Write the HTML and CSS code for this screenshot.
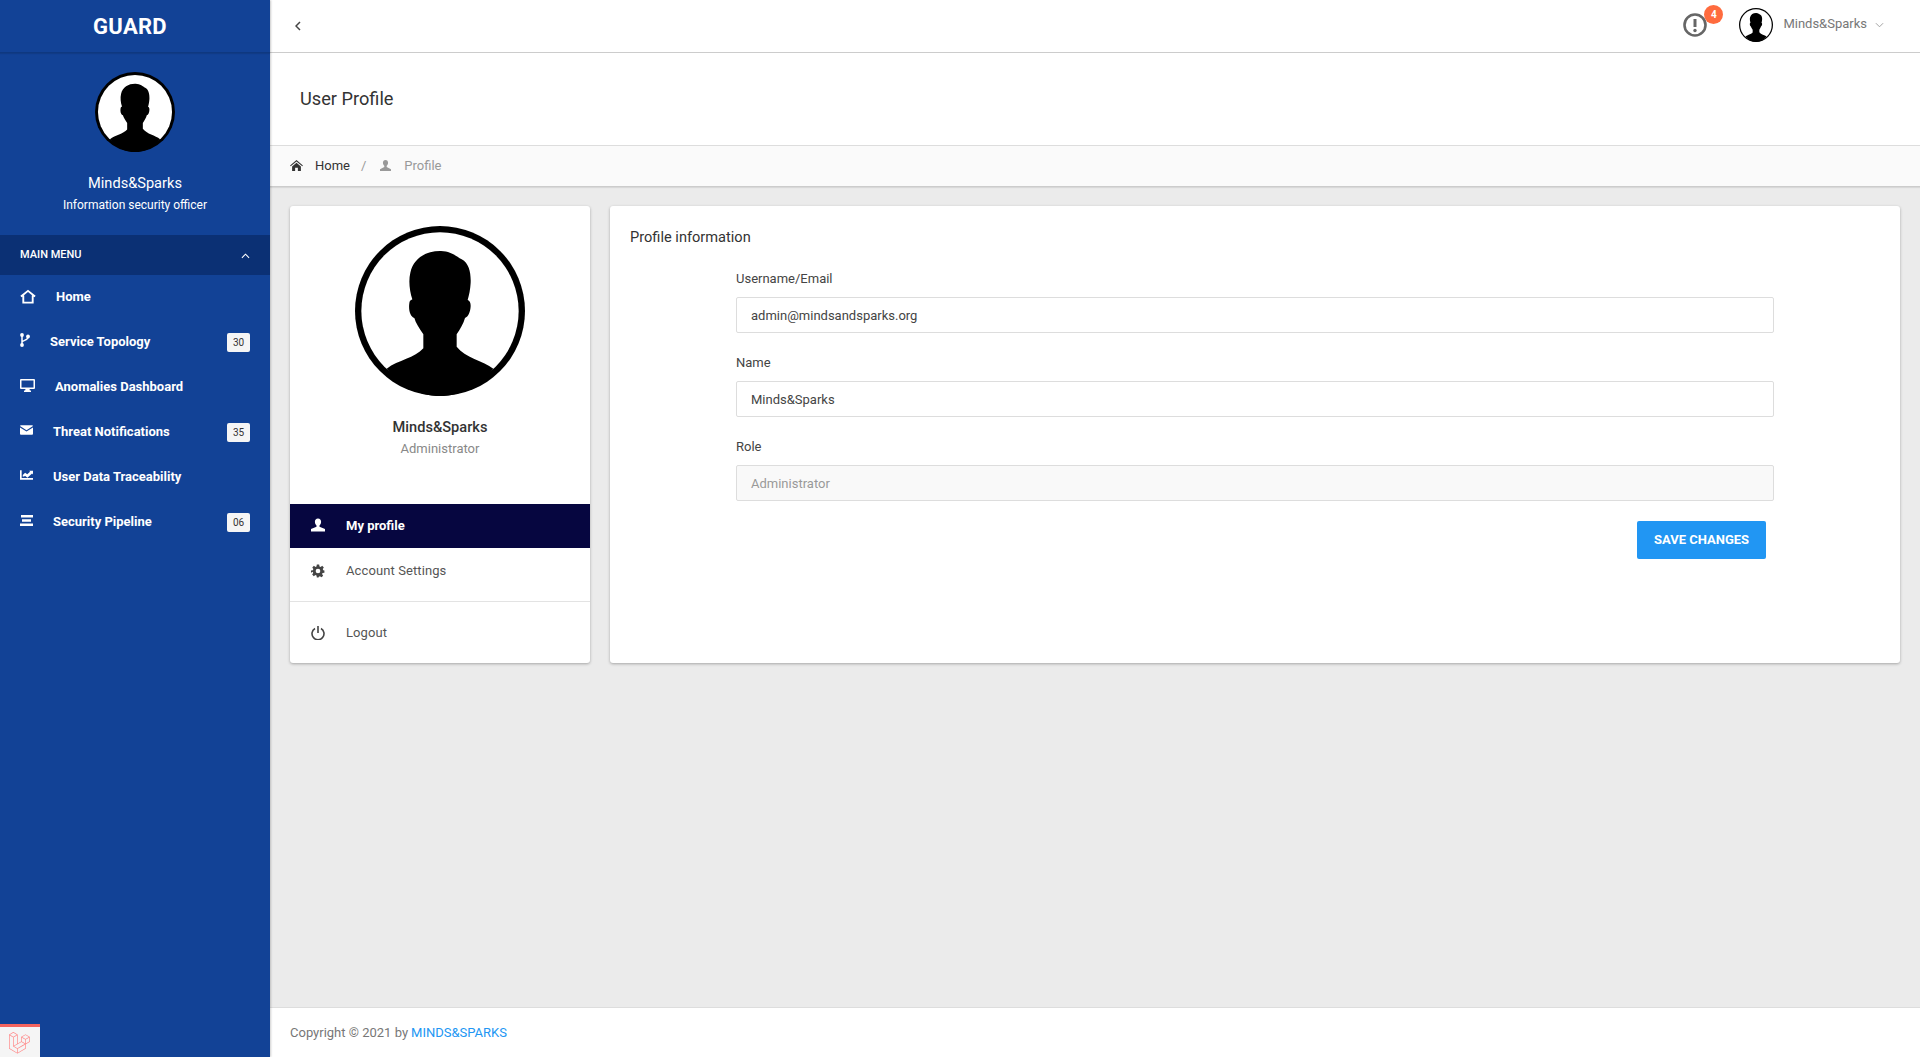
FILE: index.html
```html
<!DOCTYPE html>
<html>
	<head>
		<meta charset="utf-8">
		<title>User Profile</title>
		<link rel="stylesheet" href="styles.css">
	</head>
	<body>
		<svg class="defs" width="0" height="0">
			<symbol id="avatar" viewBox="0 0 510 510">
				<circle cx="255" cy="255" r="255" fill="#000"/>
				<circle cx="255" cy="255" r="236" fill="#fff"/>
				<path fill="#000" d="M95 428C130 402 180 396 205 367L205 325C192 306 182 290 178 276C166 272 160 252 163 232C164 222 170 222 172 220C164 196 160 165 166 140C176 95 215 74 258 75C290 76 305 92 320 100C342 112 348 140 347 170C346 190 342 208 338 222C344 224 347 230 347 240C346 258 340 272 330 276C326 292 316 308 305 325L305 362C330 396 385 404 415 428C375 480 315 510 255 510C195 510 135 480 95 428Z"/>
			</symbol>
		</svg>

		<div class="app">
			<aside class="sidebar">
				<div class="brand">GUARD</div>
				<div class="side-user">
					<svg class="side-avatar"><use href="#avatar"/></svg>
					<div class="side-name">Minds&amp;Sparks</div>
					<div class="side-role">Information security officer</div>
				</div>
				<div class="menu-head">
					<span>MAIN MENU</span>
					<svg class="menu-caret" viewBox="0 0 10 6"><path d="M1 5l4-4 4 4" fill="none" stroke="#fff" stroke-width="1.2"/></svg>
				</div>
				<ul class="side-menu">
					<li>
						<svg class="ic ic-home" viewBox="0 0 17 15"><path d="M1 7.500l7.500-6 7.500 6M3.500 6.500V14h10V6.500" fill="none" stroke="#fff" stroke-width="2"/></svg>
						<span>Home</span>
					</li>
					<li class="up">
						<svg class="ic ic-branch" viewBox="0 0 10 14"><circle cx="2" cy="2" r="1.900" fill="#fff"/><circle cx="2" cy="12" r="1.900" fill="#fff"/><circle cx="8" cy="3.500" r="1.900" fill="#fff"/><path d="M2 2v10M8 4c0 3.500-5 3-6 5" fill="none" stroke="#fff" stroke-width="1.500"/></svg>
						<span>Service Topology</span>
						<b class="badge">30</b>
					</li>
					<li class="up">
						<svg class="ic ic-desktop" viewBox="0 0 15 13"><path d="M1 0h13a1 1 0 0 1 1 1v8a1 1 0 0 1-1 1H9.500l.4 1.500H11V13H4v-1.500h1.100L5.500 10H1a1 1 0 0 1-1-1V1a1 1 0 0 1 1-1zM1.500 1.500v7h12v-7z" fill="#fff" fill-rule="evenodd"/></svg>
						<span>Anomalies Dashboard</span>
					</li>
					<li class="up">
						<svg class="ic ic-mail" viewBox="0 0 14 10"><path d="M1 0h12a1 1 0 0 1 1 .8L7 5.200 0 .8A1 1 0 0 1 1 0zM0 2.200l7 4.400 7-4.400V9a1 1 0 0 1-1 1H1a1 1 0 0 1-1-1z" fill="#fff"/></svg>
						<span>Threat Notifications</span>
						<b class="badge">35</b>
					</li>
					<li class="up">
						<svg class="ic ic-chart" viewBox="0 0 14 10"><path d="M0 0h1.800v8.200H14V10H0z" fill="#fff"/><path d="M3 7V5l2.500-2.500 2.300 1.800L10.800 1.500 10 .5H14v4l-1-1-5 4.500-2.300-2L3 7z" fill="#fff"/></svg>
						<span>User Data Traceability</span>
					</li>
					<li class="up">
						<svg class="ic ic-bars" viewBox="0 0 13 11"><path d="M1 0h12v2.500H1zM2 4.300h9v2.500H2zM0 8.500h13V11H0z" fill="#fff"/></svg>
						<span>Security Pipeline</span>
						<b class="badge">06</b>
					</li>
				</ul>
			</aside>

			<div class="main">
				<header class="topbar">
					<svg class="back" viewBox="0 0 6 10"><path d="M5 1L1 5l4 4" fill="none" stroke="#444" stroke-width="1.500"/></svg>
					<div class="top-right">
						<div class="alert">
							<svg class="alert-ic" viewBox="0 0 24 24"><circle cx="12" cy="12" r="10.500" fill="none" stroke="#666" stroke-width="2.600"/><path d="M12 6v8" stroke="#666" stroke-width="3"/><circle cx="12" cy="17.500" r="1.700" fill="#666"/></svg>
							<span class="alert-count">4</span>
						</div>
						<svg class="top-avatar"><use href="#avatar"/></svg>
						<span class="top-name">Minds&amp;Sparks</span>
						<svg class="top-caret" viewBox="0 0 10 6"><path d="M1 1l4 4 4-4" fill="none" stroke="#999" stroke-width="1"/></svg>
					</div>
				</header>

				<div class="page-title">User Profile</div>

				<nav class="crumbs">
					<svg class="crumb-home" viewBox="0 0 14 12"><path d="M7 0l7 6-.7.8L7 1.500.7 6.800 0 6z" fill="#333"/><path d="M2.200 7L7 3l4.800 4v5H8.500V8.500h-3V12H2.200z" fill="#333"/></svg>
					<span class="crumb-link">Home</span>
					<span class="crumb-sep">/</span>
					<svg class="crumb-user" viewBox="0 0 12 12"><path d="M6 0c1.800 0 2.800 1.300 2.800 3 0 1.500-.7 2.800-1.500 3.400v1.100L12 10v2H0v-2l4.700-2.500V6.400C3.900 5.800 3.200 4.500 3.200 3 3.200 1.300 4.200 0 6 0z" fill="#999"/></svg>
					<span class="crumb-now">Profile</span>
				</nav>

				<main class="content">
					<section class="card profile-card">
						<svg class="big-avatar"><use href="#avatar"/></svg>
						<div class="profile-name">Minds&amp;Sparks</div>
						<div class="profile-role">Administrator</div>
						<ul class="profile-menu">
							<li class="active">
								<svg class="pm-ic" viewBox="0 0 14 13"><path d="M7 0c2 0 3.100 1.400 3.100 3.300 0 1.700-.8 3-1.600 3.700v1.200L14 10.500V13H0v-2.500l5.500-2.300V7C4.700 6.300 3.900 5 3.900 3.300 3.900 1.400 5 0 7 0z" fill="#fff"/></svg>
								<span>My profile</span>
							</li>
							<li class="plain">
								<svg class="pm-ic" viewBox="0 0 24 24"><path fill="#444" fill-rule="evenodd" d="M10 1h4l.6 3.200 1.900.8 2.700-1.800 2.800 2.800-1.800 2.700.8 1.900L23 11.200v3.600l-3.200.6-.8 1.900 1.800 2.700-2.800 2.800-2.700-1.800-1.900.8L13 23h-3l-.6-3.200-1.900-.8-2.700 1.800-2.800-2.800 1.800-2.700-.8-1.900L0 14.800v-3.600l3.200-.6.8-1.900L2.200 6l2.800-2.800L7.700 5l1.700-.8zM12 8a4 4 0 1 0 0 8 4 4 0 0 0 0-8z"/></svg>
								<span>Account Settings</span>
							</li>
							<li class="logout">
								<svg class="pm-ic" viewBox="0 0 14 14"><path d="M4 2.500a6 6 0 1 0 6 0M7 0v7" fill="none" stroke="#444" stroke-width="1.600"/></svg>
								<span>Logout</span>
							</li>
						</ul>
					</section>

					<section class="card info-card">
						<h2 class="info-title">Profile information</h2>
						<form class="info-form">
							<label class="field-label">Username/Email</label>
							<input class="field" type="text" value="admin@mindsandsparks.org">
							<label class="field-label">Name</label>
							<input class="field" type="text" value="Minds&amp;Sparks">
							<label class="field-label">Role</label>
							<input class="field" type="text" value="Administrator" disabled>
							<div class="form-actions">
								<button class="save-btn" type="button">Save changes</button>
							</div>
						</form>
					</section>
				</main>

				<footer class="footer">Copyright © 2021 by <a href="#">MINDS&amp;SPARKS</a></footer>
			</div>
		</div>

		<div class="debug-tab">
			<svg viewBox="0 0 50 52"><path fill="#f88" d="M49.626 11.564a.809.809 0 0 1 .028.209v10.972a.8.8 0 0 1-.402.694l-9.209 5.302V39.25c0 .286-.152.55-.4.694L20.42 51.01c-.044.025-.092.041-.14.058-.018.006-.035.017-.054.022a.805.805 0 0 1-.41 0c-.022-.006-.042-.018-.063-.026-.044-.016-.09-.03-.132-.054L.402 39.944A.801.801 0 0 1 0 39.25V6.334c0-.072.01-.142.028-.21.006-.023.02-.044.028-.067.015-.042.029-.085.051-.124.015-.026.037-.047.055-.071.023-.032.044-.065.071-.093.023-.023.053-.04.079-.06.029-.024.055-.05.088-.069h.001l9.61-5.533a.802.802 0 0 1 .8 0l9.61 5.533h.002c.032.02.059.045.088.068.026.02.055.038.078.06.028.029.048.062.072.094.017.024.04.045.054.071.023.04.036.082.052.124.008.023.022.044.028.068a.809.809 0 0 1 .028.209v20.559l8.008-4.611v-10.51c0-.07.01-.141.028-.208.007-.024.02-.045.028-.068.016-.042.03-.085.052-.124.015-.026.037-.047.054-.071.024-.032.044-.065.072-.093.023-.023.052-.04.078-.06.03-.024.056-.05.088-.069h.001l9.611-5.533a.801.801 0 0 1 .8 0l9.61 5.533c.034.02.06.045.09.068.025.02.054.038.077.06.028.029.048.062.072.094.018.024.04.045.054.071.023.039.036.082.052.124.009.023.022.044.028.068zm-1.574 10.718v-9.124l-3.363 1.936-4.646 2.675v9.124l8.01-4.611zm-9.61 16.505v-9.13l-4.57 2.61-13.05 7.448v9.216l17.62-10.144zM1.602 7.719v31.068L19.22 48.93v-9.214l-9.204-5.209-.003-.002-.004-.002c-.031-.018-.057-.044-.086-.066-.025-.02-.054-.036-.076-.058l-.002-.003c-.026-.025-.044-.056-.066-.084-.02-.027-.044-.05-.06-.078l-.001-.003c-.018-.03-.029-.066-.042-.1-.013-.03-.03-.058-.038-.09v-.001c-.01-.038-.012-.078-.016-.117-.004-.03-.012-.06-.012-.09v-.002-21.481L4.965 9.654 1.602 7.72zm8.81-5.994L2.405 6.334l8.005 4.609 8.006-4.61-8.006-4.608zm4.164 28.764l4.645-2.674V7.719l-3.363 1.936-4.646 2.675v20.096l3.364-1.937zM39.243 7.164l-8.006 4.609 8.006 4.609 8.005-4.61-8.005-4.608zm-.801 10.605l-4.646-2.675-3.363-1.936v9.124l4.645 2.674 3.364 1.937v-9.124zM20.02 38.33l11.743-6.704 5.87-3.35-8-4.606-9.211 5.303-8.395 4.833 7.993 4.524z"/></svg>
		</div>
	</body>
</html>
```

FILE: styles.css
```css
* {
	margin: 0;
	padding: 0;
	box-sizing: border-box;
}

html, body {
	height: 100%;
}

body {
	font-family: Roboto, "Liberation Sans", sans-serif;
	font-size: 13px;
	color: #333;
	background-color: #ebebeb;
	overflow: hidden;
}

ul {
	list-style: none;
}

.defs {
	position: absolute;
}

.app {
	display: flex;
	height: 100vh;
}

/* sidebar */
.sidebar {
	width: 270px;
	flex: none;
	background-color: #124296;
	color: #fff;
	box-shadow: 1px 0 2px rgba(0,0,0,0.2);
	position: relative;
	z-index: 2;
}

.brand {
	height: 53px;
	padding: 1px 10px 0 0;
	line-height: 51px;
	text-align: center;
	font-size: 22px;
	font-weight: 700;
	letter-spacing: 0.3px;
	border-bottom: 1px solid #0e3880;
	box-shadow: 0 1px 1px rgba(0,0,0,0.1);
}

.side-user {
	height: 182px;
	padding-top: 19px;
	text-align: center;
}

.side-avatar {
	display: block;
	width: 80px;
	height: 80px;
	margin: 0 auto;
}

.side-name {
	margin-top: 21px;
	font-size: 14.6px;
	line-height: 20px;
}

.side-role {
	margin-top: 3px;
	font-size: 12px;
	line-height: 18px;
}

.menu-head {
	height: 40px;
	padding: 0 20px 2px;
	display: flex;
	align-items: center;
	justify-content: space-between;
	background-color: #0b3074;
	font-size: 11px;
	font-weight: 500;
}

.menu-caret {
	width: 9px;
	height: 6px;
	margin: 4px 0 0 0;
}

.side-menu li {
	height: 45px;
	padding: 0 20px 2px;
	display: flex;
	align-items: center;
	gap: 20px;
	font-size: 13px;
	font-weight: 700;
	line-height: 43px;
}

.side-menu .badge {
	margin: 1px 0 0 auto;
	width: 23px;
	height: 19px;
	line-height: 19px;
	text-align: center;
	background-color: #f5f5f5;
	border-radius: 2px;
	color: #333;
	font-size: 10px;
	font-weight: 400;
}

.ic {
	flex: none;
}

.up .ic {
	margin-top: -3px;
}

.ic-home {
	width: 16px;
	height: 15px;
}

.ic-branch {
	width: 10px;
	height: 14px;
}

.ic-desktop {
	width: 15px;
	height: 13px;
}

.ic-mail {
	width: 13px;
	height: 10px;
}

.ic-chart {
	width: 13px;
	height: 10px;
}

.ic-bars {
	width: 13px;
	height: 11px;
}

/* right part */
.main {
	flex: 1;
	min-width: 0;
	display: flex;
	flex-direction: column;
}

.topbar {
	height: 53px;
	flex: none;
	padding: 0 36px 3px 25px;
	display: flex;
	align-items: center;
	justify-content: space-between;
	background-color: #fff;
	border-bottom: 1px solid #ccc;
	box-shadow: 0 1px 1px rgba(0,0,0,0.08);
}

.back {
	width: 6px;
	height: 10px;
	margin-top: 2px;
}

.top-right {
	display: flex;
	align-items: center;
}

.alert {
	position: relative;
	width: 24px;
	height: 24px;
	margin-right: 32px;
}

.alert-ic {
	display: block;
	width: 24px;
	height: 24px;
}

.alert-count {
	position: absolute;
	left: 21px;
	top: -8px;
	width: 19px;
	height: 19px;
	line-height: 19px;
	border-radius: 50%;
	text-align: center;
	background-color: #ff6b3e;
	color: #fff;
	font-size: 10px;
	font-weight: 700;
}

.top-avatar {
	width: 34px;
	height: 34px;
}

.top-name {
	margin: 0 0 2px 10px;
	font-size: 13px;
	color: #777;
}

.top-caret {
	width: 9px;
	height: 6px;
	margin-left: 8px;
}

.page-title {
	height: 93px;
	flex: none;
	padding: 0 30px 1px;
	display: flex;
	align-items: center;
	background-color: #fff;
	border-bottom: 1px solid #ddd;
	font-size: 18.2px;
	color: #333;
}

.crumbs {
	height: 41px;
	flex: none;
	padding: 0 20px 2px;
	display: flex;
	align-items: center;
	background-color: #fafafa;
	border-bottom: 1px solid #ccc;
	box-shadow: 0 1px 1px rgba(0,0,0,0.08);
	font-size: 13px;
}

.crumb-home {
	width: 13px;
	height: 11px;
	margin-right: 12px;
}

.crumb-link {
	color: #333;
}

.crumb-sep {
	margin: 0 14px 0 11px;
	color: #999;
}

.crumb-user {
	width: 11px;
	height: 11px;
	margin-right: 13px;
}

.crumb-now {
	color: #999;
}

.content {
	flex: 1;
	padding: 19px 20px 20px;
	display: flex;
	align-items: flex-start;
	gap: 20px;
}

.card {
	height: 457px;
	background-color: #fff;
	border-radius: 3px;
	box-shadow: 0 1px 3px rgba(0,0,0,0.3);
}

.profile-card {
	width: 300px;
	flex: none;
	padding-top: 20px;
	text-align: center;
}

.big-avatar {
	display: block;
	width: 170px;
	height: 170px;
	margin: 0 auto;
}

.profile-name {
	margin-top: 21px;
	font-size: 14.6px;
	font-weight: 500;
	line-height: 20px;
}

.profile-role {
	margin-top: 3px;
	font-size: 13px;
	line-height: 18px;
	color: #888;
}

.profile-menu {
	margin-top: 46px;
	text-align: left;
}

.profile-menu li {
	display: flex;
	align-items: center;
	gap: 21px;
	padding-left: 21px;
	font-size: 13px;
	letter-spacing: 0.1px;
	color: #555;
}

.profile-menu .active {
	height: 44px;
	padding-bottom: 2px;
	background-color: #060640;
	color: #fff;
	font-weight: 700;
	letter-spacing: 0;
}

.profile-menu .plain {
	height: 54px;
	padding-bottom: 8px;
	border-bottom: 1px solid #e3e3e3;
}

.profile-menu .logout {
	height: 61px;
}

.pm-ic {
	width: 14px;
	height: 14px;
	flex: none;
}

.info-card {
	flex: 1;
	padding: 21px 20px 20px;
}

.info-title {
	font-size: 14.6px;
	font-weight: 400;
	line-height: 20px;
	color: #333;
}

.info-form {
	width: 1038px;
	margin: 22px 0 0 106px;
}

.field-label {
	display: block;
	height: 28px;
	font-size: 13px;
	line-height: 19px;
	color: #444;
}

.field {
	display: block;
	width: 100%;
	height: 36px;
	margin-bottom: 20px;
	padding: 0 14px;
	border: 1px solid #ddd;
	border-radius: 2px;
	background-color: #fff;
	font-family: Roboto, "Liberation Sans", sans-serif;
	font-size: 13px;
	color: #444;
}

.field:disabled {
	background-color: #f9f9f9;
	color: #999;
}

.form-actions {
	display: flex;
	justify-content: flex-end;
	padding-right: 8px;
}

.save-btn {
	width: 129px;
	height: 38px;
	padding-bottom: 2px;
	border: none;
	border-radius: 2px;
	background-color: #2196f3;
	color: #fff;
	font-family: Roboto, "Liberation Sans", sans-serif;
	font-size: 13px;
	font-weight: 700;
	text-transform: uppercase;
}

.footer {
	height: 50px;
	flex: none;
	padding: 0 20px;
	display: flex;
	align-items: center;
	gap: 3px;
	background-color: #fff;
	border-top: 1px solid #ddd;
	font-size: 13px;
	color: #777;
}

.footer a {
	color: #2196f3;
	text-decoration: none;
}

/* debug tab over the sidebar corner */
.debug-tab {
	position: fixed;
	left: 0;
	bottom: 0;
	width: 40px;
	height: 33px;
	z-index: 5;
	padding: 5px 9px 0;
	background-color: #f5f5f5;
	border-top: 3px solid #f4645f;
}

.debug-tab svg {
	display: block;
	width: 21px;
	height: 22px;
}
```
